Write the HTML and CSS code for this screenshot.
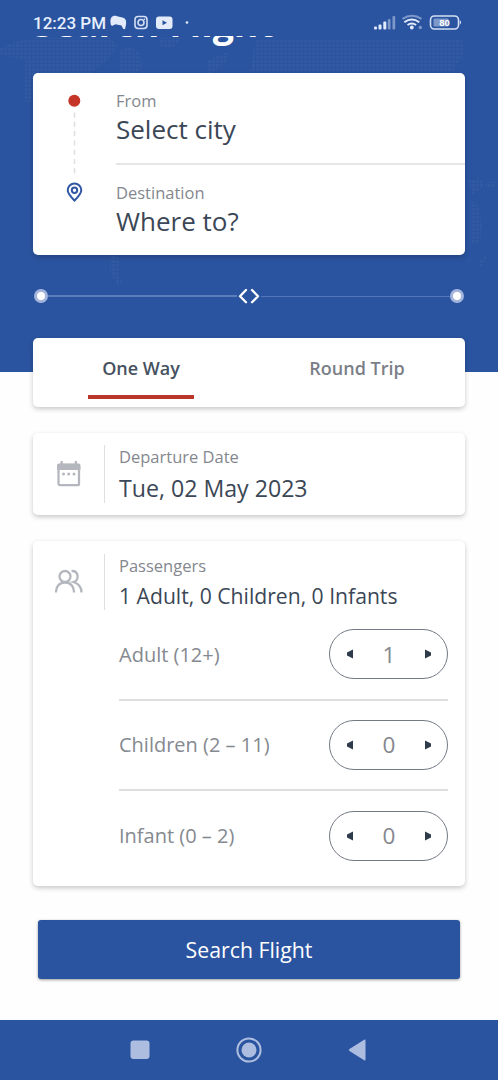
FILE: index.html
```html
<!DOCTYPE html>
<html lang="en">
<head>
<meta charset="utf-8">
<title>Search Flight</title>
<link rel="stylesheet" href="styles.css">
</head>
<body>
<div class="screen">
  <div class="statusbar">
    <span class="clock">12:23 PM</span>
    <svg class="status-apps" width="84" height="20" viewBox="0 0 84 20">
      <path class="light" d="M.500 11.500C0 7 2 4.500 5.500 4.800l3.500 1 3.500.6C16 7.500 16.500 10 16 13.500l-.8 4c-.5 1-1.700.8-2.200 0L11.500 14.500l-6-1.300-2.500 1.300c-1.300.6-2.400 0-2.500-3z"/>
      <rect class="line" x="25" y="5.500" width="12" height="12" rx="3.200"/>
      <circle class="line" cx="31" cy="11.500" r="3"/>
      <circle class="light" cx="34.400" cy="8.200" r=".8"/>
      <rect class="light" x="46" y="5.500" width="16.500" height="12.500" rx="3"/>
      <path class="blue" d="M52.500 9.300v5l4.500-2.500z"/>
      <circle class="light" cx="77" cy="11.500" r="1.300"/>
    </svg>
    <svg class="status-system" width="90" height="20" viewBox="0 0 90 20">
      <g class="light">
        <rect x="1" y="15.500" width="3" height="3" rx="1"/>
        <rect x="5.500" y="13.500" width="3" height="5" rx="1"/>
        <rect x="10.300" y="10.500" width="3" height="8" rx="1"/>
        <rect class="dim" x="14.800" y="8" width="2.700" height="10.500" rx="1"/>
        <rect class="dim" x="19.500" y="5" width="2.700" height="13.500" rx="1"/>
        <circle cx="38.800" cy="16.500" r="1.900"/>
        <circle class="dim" cx="47.300" cy="16.500" r="1.700"/>
      </g>
      <path class="arc dim" d="M29.500 7.800q9.500-6 19 0"/>
      <path class="arc" d="M31.300 11.200q7.500-5.400 15 0M34.500 14q4.300-3 8.600 0"/>
      <rect class="line" x="57.500" y="5" width="28" height="13" rx="4"/>
      <path class="light" d="M86.800 9.300q2.500 2.200 0 4.400z"/>
      <rect class="dim light" x="60.500" y="7.500" width="15" height="8" rx="1"/>
      <text class="battery" x="71.500" y="15" text-anchor="middle">80</text>
    </svg>
  </div>

  <header class="hero">
    <svg class="map" width="498" height="336" viewBox="0 36 498 336">
      <defs>
        <pattern id="dots" width="4" height="4" patternUnits="userSpaceOnUse">
          <rect class="map-dot" width="3" height="3"/>
        </pattern>
      </defs>
      <g fill="url(#dots)">
        <path d="M0 48l20-8 15-2h75l8 8-10 14-20 14H35l-4 28H25V60L0 54z"/>
        <path d="M120 50l8-4 12 6 2 16-10 8h-12zM160 38h22l-10 10-12-2zM208 60l20-8-2 10-18 14z"/>
        <path d="M256 40h206l2 14-12 18H250zM468 180l12-2 4 8-12 8zM486 182h8v6h-8z"/>
        <path d="M470 200l8 4 4 22-2 16-10 4z"/>
        <path d="M110 254l10 4-2 14 4 10-4 4-8-14zM465 260l6-2v4zM478 262l8-8v6l-6 8z"/>
      </g>
    </svg>
    <h1 class="title">Search Flight</h1>
    <section class="card route">
      <svg class="route-icons" width="20" height="112" viewBox="0 0 20 112">
        <circle class="red" cx="10.300" cy="6.700" r="6"/>
        <path class="route-dash" d="M10.500 18.500v62"/>
        <path class="pin" d="M10.500 106.500c-4-4-6.800-6.700-6.800-10.200a6.800 6.800 0 0 1 13.600 0c0 3.500-2.800 6.200-6.800 10.200z"/>
        <circle class="pin" cx="10.500" cy="96.300" r="2.700"/>
      </svg>
      <div class="route-fields">
        <div class="route-field from"><span class="label">From</span><span class="city">Select city</span></div>
        <div class="route-field to"><span class="label">Destination</span><span class="city">Where to?</span></div>
      </div>
    </section>
    <div class="slider">
      <span class="knob"></span><span class="track left"></span>
      <svg class="arrows" width="24" height="16" viewBox="0 0 24 16"><path d="M9 2L3 8.300l6 6M15 2l6 6.300-6 6"/></svg>
      <span class="track"></span><span class="knob"></span>
    </div>
  </header>

  <nav class="card tabs">
    <span class="tab active">One Way</span>
    <span class="tab">Round Trip</span>
  </nav>

  <section class="card date">
    <svg class="date-icon" width="26" height="28" viewBox="0 0 26 28">
      <rect class="gray-line" x="2.500" y="5" width="20.500" height="20.200" rx="1.500"/>
      <path class="gray" d="M3 3.500h19.500q2 0 2 2V10H1V5.500q0-2 2-2zM4.500 1h2.300v4H4.500zM18.700 1H21v4h-2.300z"/>
      <circle class="gray" cx="7.500" cy="14" r="1.500"/><circle class="gray" cx="12.700" cy="14" r="1.500"/><circle class="gray" cx="18" cy="14" r="1.500"/>
    </svg>
    <div class="summary date-summary"><span class="label">Departure Date</span><span class="value">Tue, 02 May 2023</span></div>
  </section>

  <section class="card passengers">
    <div class="passengers-head">
      <svg class="people-icon" width="30" height="26" viewBox="0 0 30 26">
        <path class="gray-line" d="M2 24.500v-1c0-5 3.500-9 9-9s9 4 9 9v1"/>
        <circle class="gray-line" cx="11" cy="8.500" r="5.500"/>
        <path class="gray-line" d="M17.500 3c7.500-.5 8 9.500 2 11 5 1.500 8 4.500 8 10.500"/>
      </svg>
      <div class="summary"><span class="label">Passengers</span><span class="value small">1 Adult, 0 Children, 0 Infants</span></div>
    </div>
    <div class="counters">
      <div class="row"><span class="kind">Adult (12+)</span><div class="stepper"><svg width="8" height="12" viewBox="0 0 8 12"><path d="M7 1.500v9L1 7.500v-3z"/></svg><span>1</span><svg width="8" height="12" viewBox="0 0 8 12"><path d="M1 1.500v9l6-3v-3z"/></svg></div></div>
      <div class="row"><span class="kind">Children (2 – 11)</span><div class="stepper"><svg width="8" height="12" viewBox="0 0 8 12"><path d="M7 1.500v9L1 7.500v-3z"/></svg><span>0</span><svg width="8" height="12" viewBox="0 0 8 12"><path d="M1 1.500v9l6-3v-3z"/></svg></div></div>
      <div class="row"><span class="kind">Infant (0 – 2)</span><div class="stepper"><svg width="8" height="12" viewBox="0 0 8 12"><path d="M7 1.500v9L1 7.500v-3z"/></svg><span>0</span><svg width="8" height="12" viewBox="0 0 8 12"><path d="M1 1.500v9l6-3v-3z"/></svg></div></div>
    </div>
  </section>

  <button class="search">Search Flight</button>

  <footer class="navbar">
    <svg width="26" height="28" viewBox="0 0 26 28"><rect x="3.500" y="4.500" width="19" height="18.500" rx="3"/></svg>
    <svg width="28" height="28" viewBox="0 0 28 28"><circle cx="14" cy="14" r="7.500"/><circle class="ring" cx="14" cy="14" r="11.600"/></svg>
    <svg width="26" height="28" viewBox="0 0 26 28"><path d="M20.500 4.500v19q0 1.500-1.300.8L4.500 15q-1.500-1 0-2L19.200 3.700q1.300-.7 1.300.8z"/></svg>
  </footer>
</div>
</body>
</html>
```
FILE: styles.css
```css
* { box-sizing: border-box; }
body { margin: 0; background: #fff; font-family: "Open Sans", "Noto Sans", sans-serif; color: #3b4756; }
svg { display: block; flex: none; }
.screen { width: 498px; height: 1080px; display: flex; flex-direction: column; overflow: hidden; background: #fefefe; }

.statusbar { height: 36px; flex: none; display: flex; align-items: flex-start; padding: 11px 35px 0 33px; background: #2b54a0; color: #e8f0ff; }
.clock { width: 77px; font: 500 17px/24px Roboto, sans-serif; white-space: nowrap; }
.status-system { margin-left: auto; }
.light { fill: #e3ebfa; }
.blue { fill: #2b54a0; }
.line { fill: none; stroke: #d4dff4; stroke-width: 1.6; }
.arc { fill: none; stroke: #e3ebfa; stroke-width: 2; }
.dim { opacity: .45; }
.battery { fill: #fff; font: 700 9.5px "Liberation Sans", sans-serif; }

.hero { position: relative; height: 336px; flex: none; overflow: hidden; background: #2b54a0; }
.map { position: absolute; inset: 0; }
.map-dot { fill: #fff; opacity: .035; }
.title { position: relative; height: 74px; margin: -37px 0 0; padding-left: 33px; font-size: 37.5px; line-height: 47px; color: #fff; }

.card { background: #fff; border-radius: 5px; box-shadow: 0 2px 5px rgba(0, 0, 0, .22); }
.route { position: relative; width: 432px; height: 182px; margin-left: 33px; display: flex; padding: 21px 0 0 31px; }
.route-icons { margin-right: 32px; }
.red { fill: #c43427; }
.route-dash { stroke: #dedfe2; stroke-width: 1.5; stroke-dasharray: 5 4.3; }
.pin { fill: none; stroke: #3157a4; stroke-width: 2; }
.route-fields { flex: 1; }
.route-field { display: flex; flex-direction: column; height: 92px; }
.from { height: 71px; border-bottom: 2px solid #e5e6e8; }
.to { padding-top: 21px; }
.label { margin-top: -2px; font-size: 16.5px; line-height: 17px; color: #84878e; white-space: nowrap; }
.city { margin-top: -2px; font-size: 26px; line-height: 44px; white-space: nowrap; }

.slider { position: relative; display: flex; align-items: center; margin: 33px 34px 0 34px; height: 16px; }
.knob { width: 14px; height: 14px; border: 3.5px solid #a3b5dc; border-radius: 50%; background: #fff; }
.track { flex: 1; height: 1px; background: #5475b7; }
.left { height: 1.5px; background: #5d7dbc; }
.arrows { fill: none; stroke: #fff; stroke-width: 2.3; stroke-linecap: round; stroke-linejoin: round; }

.tabs { position: relative; flex: none; width: 432px; height: 69px; margin: -34px 0 0 33px; display: grid; grid-template-columns: 1fr 1fr; }
.tab { position: relative; text-align: center; font-size: 18px; font-weight: 600; line-height: 60px; color: #7b7f88; }
.active { color: #465160; }
.active::after { content: ""; position: absolute; left: 55px; top: 57px; width: 106px; height: 4px; background: #b93628; }

.date { flex: none; width: 432px; height: 82px; margin: 26px 0 0 33px; display: flex; padding: 12px 0 12px 23px; }
.date-icon { margin: 15px 22px 0 0; }
.gray { fill: #b4b8be; }
.gray-line { fill: none; stroke: #b4b8be; stroke-width: 2.3; }
.summary { height: 56px; border-left: 1.5px solid #dddfe2; padding: 5px 0 0 14px; display: flex; flex-direction: column; }
.date-summary { height: 58px; }
.value { margin-top: 0; font-size: 23.15px; line-height: 46px; white-space: nowrap; }
.small { font-size: 21.15px; line-height: 44px; }

.passengers { flex: none; width: 432px; height: 345px; margin: 26px 0 0 33px; padding: 13px 17px 0 21px; }
.passengers-head { display: flex; }
.people-icon { margin: 14px 20px 0 0; }
.counters { margin: 0 0 0 65px; }
.row { height: 90.5px; display: flex; align-items: center; justify-content: space-between; border-bottom: 2px solid #dcdee0; }
.row:last-child { height: 89px; border: 0; }
.kind { font-size: 20px; color: #858990; white-space: nowrap; }
.stepper { width: 119px; height: 50px; border: 1.5px solid #737985; border-radius: 25px; display: flex; align-items: center; justify-content: space-between; padding: 0 15px 0 16px; font-size: 22.5px; color: #84878d; }
.stepper svg { fill: #2e3b4b; }

.search { flex: none; width: 422px; height: 59px; margin: 34px 0 0 38px; padding: 0 0 1px; border: 0; border-radius: 3px; background: #2b54a0; box-shadow: 0 1px 3px rgba(0, 0, 0, .4); color: #fff; font: 21.3px "Open Sans", sans-serif; }
.navbar { flex: none; height: 60px; margin-top: auto; display: flex; align-items: center; gap: 82px; padding-left: 127px; background: #2b54a0; }
.navbar svg { fill: #acbde0; }
.navbar .ring { fill: none; stroke: #acbde0; stroke-width: 2; }
```
